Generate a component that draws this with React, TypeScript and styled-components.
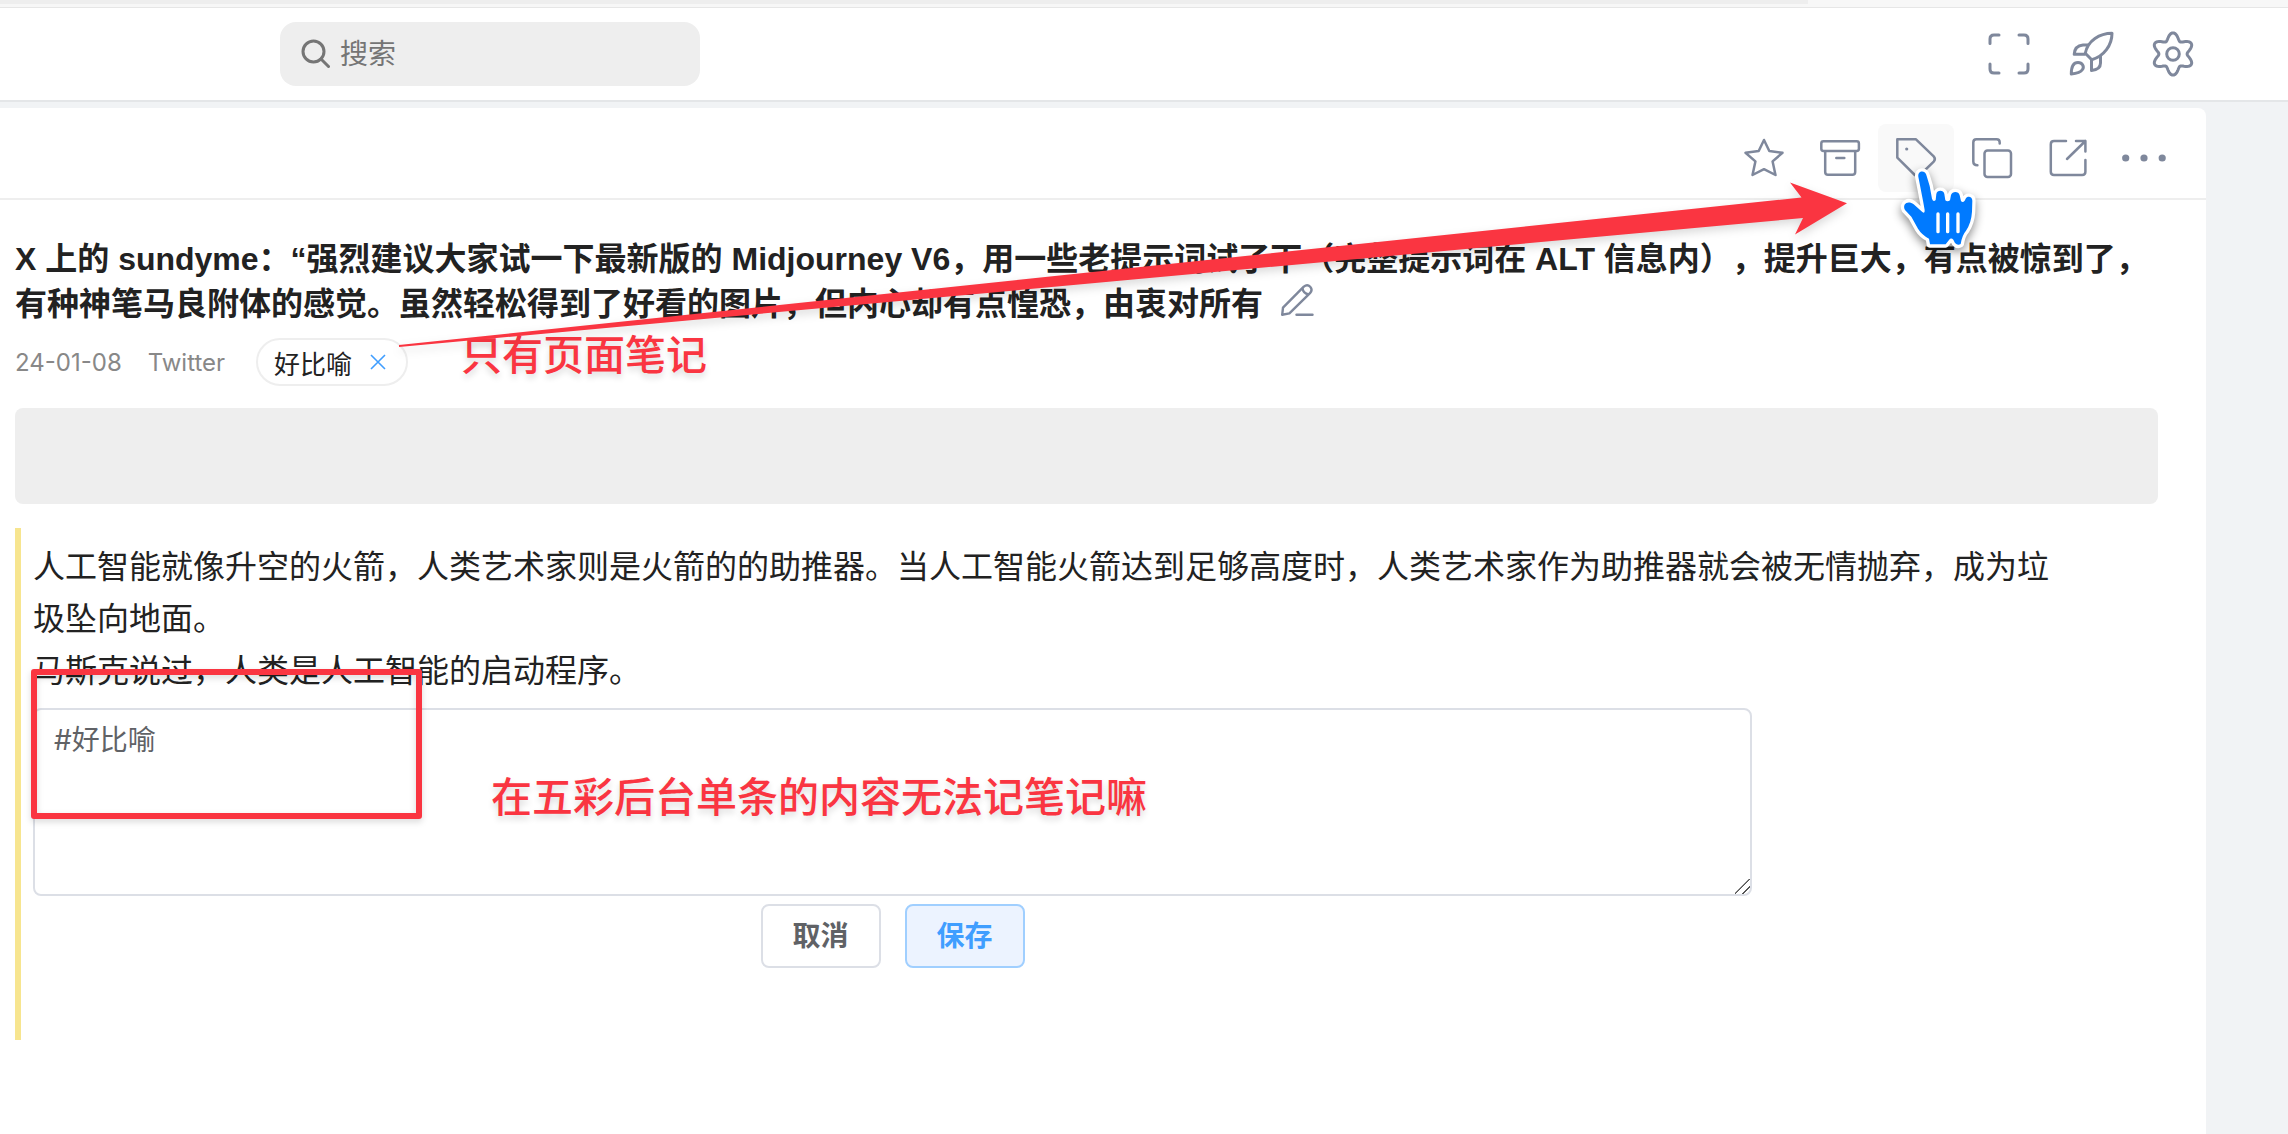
import React from "react";
import styled, { createGlobalStyle, css } from "styled-components";

const sans = `Inter, "Noto Sans CJK SC", sans-serif`;
const headingSans = `"Liberation Sans", "Noto Sans CJK SC", sans-serif`;
const iconColor = "#7f889c";
const markRed = "#fa3541";

const GlobalStyle = createGlobalStyle`
  *, *::before, *::after { box-sizing: border-box; }
  body {
    margin: 0;
    background: #f1f3f5;
    color: #222;
    font-family: ${sans};
    text-spacing-trim: space-all;
  }
  button, input, textarea { font-family: inherit; }
`;

const Page = styled.div`
  position: relative;
  display: flex;
  flex-direction: column;
  min-height: 100vh;
  overflow: hidden;
`;

const BrowserEdge = styled.div`
  height: 8px;
  background: #f7f7f7;
  border-bottom: 1px solid #e6e6e6;
`;

const BrowserTabs = styled.div`
  width: 79%;
  height: 4px;
  background: #eeeeee;
`;

const Header = styled.header`
  display: flex;
  align-items: center;
  justify-content: space-between;
  height: 94px;
  padding: 0 91px 0 280px;
  background: #fff;
  border-bottom: 2px solid #e4e6e8;
`;

const SearchBox = styled.label`
  display: flex;
  align-items: center;
  gap: 10px;
  width: 420px;
  height: 64px;
  padding: 0 20px;
  border-radius: 16px;
  background: #eeeeee;
  color: #757575;
`;

const SearchInput = styled.input`
  flex: 1;
  min-width: 0;
  padding: 0;
  border: 0;
  outline: 0;
  background: transparent;
  font-size: 28px;
  line-height: 40px;
  &::placeholder {
    color: #757575;
    opacity: 1;
  }
`;

const HeaderActions = styled.nav`
  display: flex;
  gap: 34px;
`;

const plainButton = css`
  display: inline-flex;
  align-items: center;
  justify-content: center;
  padding: 0;
  border: 0;
  background: transparent;
  color: ${iconColor};
  cursor: pointer;
`;

const HeaderButton = styled.button`
  ${plainButton}
  width: 48px;
  height: 48px;
`;

const Card = styled.main`
  flex: 1;
  margin: 6px 82px 0 0;
  background: #fff;
  border-top-right-radius: 8px;
`;

const Toolbar = styled.div`
  display: flex;
  justify-content: flex-end;
  padding: 16px 24px 6px;
  border-bottom: 2px solid #eeeeee;
`;

const ToolButton = styled.button<{ $hovered?: boolean }>`
  ${plainButton}
  width: 76px;
  height: 68px;
  border-radius: 8px;
  background: ${(p) => (p.$hovered ? "#f9f9f9" : "transparent")};
`;

const Article = styled.article`
  padding: 37px 24px 0 15px;
`;

const Title = styled.h1`
  margin: 0 24px 0 0;
  font-family: ${headingSans};
  font-size: 32px;
  line-height: 45px;
  font-weight: 600;
`;

const EditButton = styled.button`
  ${plainButton}
  width: 36px;
  height: 36px;
  margin-left: 16px;
  vertical-align: -3px;
`;

const Meta = styled.div`
  display: flex;
  align-items: center;
  margin-top: 11px;
  font-size: 24px;
  color: #888;
`;

const MetaItem = styled.span`
  margin-right: 26px;
`;

const Tag = styled.span`
  display: inline-flex;
  align-items: center;
  gap: 18px;
  height: 48px;
  margin-left: 5px;
  padding: 0 20px 0 16px;
  border: 2px solid #eeeeee;
  border-radius: 24px;
  color: #222;
  font-size: 26px;
`;

const TagClose = styled.button`
  ${plainButton}
  color: #409eff;
`;

const PageNote = styled.section`
  height: 96px;
  margin: 22px 24px 0 0;
  border-radius: 8px;
  background: #eeeeee;
`;

const Highlight = styled.section`
  margin-top: 24px;
  padding: 13px 0 72px 12px;
  border-left: 6px solid #f7e58f;
`;

const Quote = styled.p`
  margin: 0;
  padding-right: 120px;
  font-size: 32px;
  line-height: 52px;
`;

const NoteForm = styled.form`
  display: flex;
  flex-direction: column;
  width: 80%;
  margin-top: 11px;
`;

const NoteInput = styled.textarea`
  display: block;
  width: 100%;
  height: 188px;
  padding: 10px 19px;
  border: 2px solid #dcdfe6;
  border-radius: 8px;
  outline: 0;
  color: #606266;
  font-size: 28px;
  line-height: 40px;
  resize: vertical;
  &::-webkit-resizer {
    background: linear-gradient(
      135deg,
      transparent 46%,
      #555 47%,
      #555 52%,
      transparent 53%,
      transparent 71%,
      #555 72%,
      #555 77%,
      transparent 78%
    );
  }
`;

const FormActions = styled.div`
  display: flex;
  justify-content: center;
  gap: 24px;
  margin-top: 8px;
`;

const FormButton = styled.button<{ $primary?: boolean }>`
  width: 120px;
  height: 64px;
  padding: 0;
  border: 2px solid ${(p) => (p.$primary ? "#a0cfff" : "#dcdfe6")};
  border-radius: 8px;
  background: ${(p) => (p.$primary ? "#ecf3ff" : "#fff")};
  color: ${(p) => (p.$primary ? "#409eff" : "#606266")};
  font-size: 28px;
  line-height: 40px;
  font-weight: 600;
`;

/* Mark-up drawn freely over the page */
const MarkText = styled.p<{ $x: number; $y: number }>`
  position: absolute;
  left: ${(p) => p.$x}px;
  top: ${(p) => p.$y}px;
  margin: 0;
  color: ${markRed};
  font-size: 41px;
  line-height: 56px;
  font-weight: 500;
  white-space: nowrap;
  text-shadow: 0 4px 6px rgba(0, 0, 0, 0.15);
`;

const MarkFrame = styled.div`
  position: absolute;
  left: 31px;
  top: 669px;
  width: 391px;
  height: 150px;
  border: 6px solid ${markRed};
  border-radius: 3px;
  filter: drop-shadow(0 3px 3px rgba(0, 0, 0, 0.15));
  pointer-events: none;
`;

const ArrowDrawing = styled.svg`
  position: absolute;
  left: 390px;
  top: 170px;
  filter: drop-shadow(0 4px 5px rgba(0, 0, 0, 0.15));
  pointer-events: none;
`;

const HandDrawing = styled.svg`
  position: absolute;
  left: 1900px;
  top: 168px;
  overflow: visible;
  filter: drop-shadow(0 4px 5px rgba(0, 0, 0, 0.45));
  pointer-events: none;
`;

function Icon({ stroke = 2.5, children }: { stroke?: number; children: React.ReactNode }) {
  return (
    <svg
      width="48"
      height="48"
      viewBox="0 0 48 48"
      fill="none"
      stroke="currentColor"
      strokeWidth={stroke}
      strokeLinejoin="round"
      aria-hidden="true"
    >
      {children}
    </svg>
  );
}

const gearPath = (() => {
  const points: string[] = [];
  for (let deg = 0; deg < 360; deg += 3) {
    const a = (deg * Math.PI) / 180;
    const wave = Math.cos(6 * (a - Math.PI / 2));
    const r = 17.6 + 3.5 * wave;
    points.push(`${(24 + r * Math.cos(a)).toFixed(2)} ${(24 + r * Math.sin(a)).toFixed(2)}`);
  }
  return `M${points.join("L")}Z`;
})();

export default function App() {
  return (
    <>
      <GlobalStyle />
      <Page>
        <BrowserEdge>
          <BrowserTabs />
        </BrowserEdge>
        <Header>
          <SearchBox>
            <svg width="30" height="30" viewBox="0 0 30 30" fill="none" stroke="currentColor" strokeWidth="3" aria-hidden="true">
              <circle cx="13.5" cy="12.5" r="10.5" />
              <path d="M21 20 28.5 27.5" strokeLinecap="round" />
            </svg>
            <SearchInput type="text" placeholder="搜索" aria-label="搜索" />
          </SearchBox>
          <HeaderActions>
            <HeaderButton type="button" aria-label="全屏">
              <Icon stroke={3}>
                <g strokeLinecap="round">
                  <path d="M5 13.5V9Q5 5 9 5H14" />
                  <path d="M34 5H39Q43 5 43 9V13.5" />
                  <path d="M43 34V39Q43 43 39 43H34" />
                  <path d="M14 43H9Q5 43 5 39V34" />
                </g>
              </Icon>
            </HeaderButton>
            <HeaderButton type="button" aria-label="探索">
              <Icon stroke={3}>
                <path d="M45 3.2C33 3.2 20.5 10.5 18.3 23.3L24.7 29.7C37 26.5 45 15 45 3.2Z" />
                <path d="M21.5 15H16C10.5 15.5 7.5 19 7.2 24.3H18.5" />
                <path d="M24.5 30V40.5C30 40 33.5 37.5 33.5 33V25.5" />
                <path d="M4.3 44C4.3 37 6.5 32.6 11 32.6C15.5 32.6 17.5 36.5 15.5 39.5C13.5 42.5 9 43.6 4.3 44Z" />
              </Icon>
            </HeaderButton>
            <HeaderButton type="button" aria-label="设置">
              <Icon stroke={3}>
                <path d={gearPath} />
                <circle cx="24" cy="24" r="6.3" />
              </Icon>
            </HeaderButton>
          </HeaderActions>
        </Header>

        <Card>
          <Toolbar>
            <ToolButton type="button" aria-label="收藏">
              <Icon>
                <path d="M24 6 29.3 17 42.5 18.8 32.6 27.4 35.5 41 24 35.2 12.5 41 15.4 27.4 5.5 18.8 18.7 17Z" />
              </Icon>
            </ToolButton>
            <ToolButton type="button" aria-label="归档">
              <Icon>
                <rect x="5.3" y="7.2" width="37.6" height="9.8" rx="2.2" />
                <path d="M9.2 17V38Q9.2 40.8 12 40.8H36.3Q39.2 40.8 39.2 38V17" />
                <path d="M20.3 24H28.3" strokeLinecap="round" />
              </Icon>
            </ToolButton>
            <ToolButton type="button" aria-label="标签" $hovered>
              <Icon>
                <path d="M5.3 5.3H24L41.7 22.4Q44 25 41.7 27.6L28 41Q25.3 43 22.8 41L5.3 23.6Z" />
                <circle cx="14.7" cy="15" r="1.6" fill="currentColor" stroke="none" />
              </Icon>
            </ToolButton>
            <ToolButton type="button" aria-label="复制">
              <Icon>
                <path d="M9.4 31.2Q5.3 31.2 5.3 27.5V8.4Q5.3 5.3 8.4 5.3H28.6Q31.7 5.3 31.7 8.4V9.5" strokeLinecap="round" />
                <rect x="16.5" y="16.5" width="26.5" height="26.5" rx="3" />
              </Icon>
            </ToolButton>
            <ToolButton type="button" aria-label="打开原文">
              <Icon>
                <path d="M22 7H10Q6.8 7 6.8 10.2V37.8Q6.8 41 10 41H38.2Q41.4 41 41.4 37.8V26" strokeLinecap="round" />
                <path d="M32 7H41.4V17.5M41.4 7 23 25" strokeLinecap="round" />
              </Icon>
            </ToolButton>
            <ToolButton type="button" aria-label="更多">
              <Icon>
                <g fill="currentColor" stroke="none">
                  <circle cx="5.7" cy="24" r="3.6" />
                  <circle cx="24" cy="24" r="3.6" />
                  <circle cx="42.2" cy="24" r="3.6" />
                </g>
              </Icon>
            </ToolButton>
          </Toolbar>

          <Article>
            <Title>
              X 上的 sundyme：“强烈建议大家试一下最新版的 Midjourney V6，用一些老提示词试了下（完整提示词在 ALT 信息内），提升巨大，有点被惊到了，有种神笔马良附体的感觉。虽然轻松得到了好看的图片，但内心却有点惶恐，由衷对所有
              <EditButton type="button" aria-label="编辑标题">
                <svg width="36" height="36" viewBox="0 0 36 36" fill="none" stroke="currentColor" strokeWidth="2.4" strokeLinejoin="round" aria-hidden="true">
                  <path d="M3.2 32.8 4 25.6 24.8 4.6Q28.4 1.8 31.2 4.8Q34 7.8 31 11.2L10.4 31.4Z" />
                  <path d="M23.4 6.2Q24.2 11.2 29.6 12.4" />
                  <path d="M17.5 32.8H33.5" strokeLinecap="round" />
                </svg>
              </EditButton>
            </Title>
            <Meta>
              <MetaItem>24-01-08</MetaItem>
              <MetaItem>Twitter</MetaItem>
              <Tag>
                好比喻
                <TagClose type="button" aria-label="删除标签">
                  <svg width="16" height="16" viewBox="0 0 16 16" stroke="currentColor" strokeWidth="1.6" aria-hidden="true">
                    <path d="M1 1 15 15M15 1 1 15" />
                  </svg>
                </TagClose>
              </Tag>
            </Meta>
            <PageNote aria-label="页面笔记" />
            <Highlight>
              <Quote>
                人工智能就像升空的火箭，人类艺术家则是火箭的的助推器。当人工智能火箭达到足够高度时，人类艺术家作为助推器就会被无情抛弃，成为垃圾坠向地面。
                <br />
                马斯克说过，人类是人工智能的启动程序。
              </Quote>
              <NoteForm onSubmit={(e) => e.preventDefault()}>
                <NoteInput aria-label="笔记" defaultValue="#好比喻" />
                <FormActions>
                  <FormButton type="button">取消</FormButton>
                  <FormButton type="submit" $primary>
                    保存
                  </FormButton>
                </FormActions>
              </NoteForm>
            </Highlight>
          </Article>
        </Card>

        <MarkText $x={461} $y={327}>只有页面笔记</MarkText>
        <MarkText $x={491} $y={769}>在五彩后台单条的内容无法记笔记嘛</MarkText>
        <MarkFrame />
        <ArrowDrawing width="1470" height="190" viewBox="390 170 1470 190" fill={markRed} aria-hidden="true">
          <path d="M399 345 1801.5 197.5 1790 182.5 1847 203.3 1795 234.5 1803 218 399 347Z" />
        </ArrowDrawing>
        <HandDrawing width="80" height="80" viewBox="480 144 240 240" aria-hidden="true">
          <path
            d="M535 170C533 150 557 150 560 168L569 198 576 236Q580 248 587 240L589 222C591 209 611 209 613 222L616 241Q622 247 630 241L633 225C637 213 656 213 659 226L663 243Q668 249 674 242L677 236C682 227 697 229 697 242L696 275Q694 308 678 332Q666 346 662 372Q653 378 645 369L640 359Q633 352 627 360L617 373H570L567 356Q545 344 534 326L514 290 495 270C485 250 506 240 521 253L547 276Q555 282 554 270L549 242Z"
            fill="#007aff"
            stroke="#fff"
            strokeWidth="20"
            strokeLinejoin="round"
            paintOrder="stroke"
          />
          <path d="M594 282V335M623 282V335M654 282V335" stroke="#fff" strokeWidth="10" strokeLinecap="round" />
        </HandDrawing>
      </Page>
    </>
  );
}
